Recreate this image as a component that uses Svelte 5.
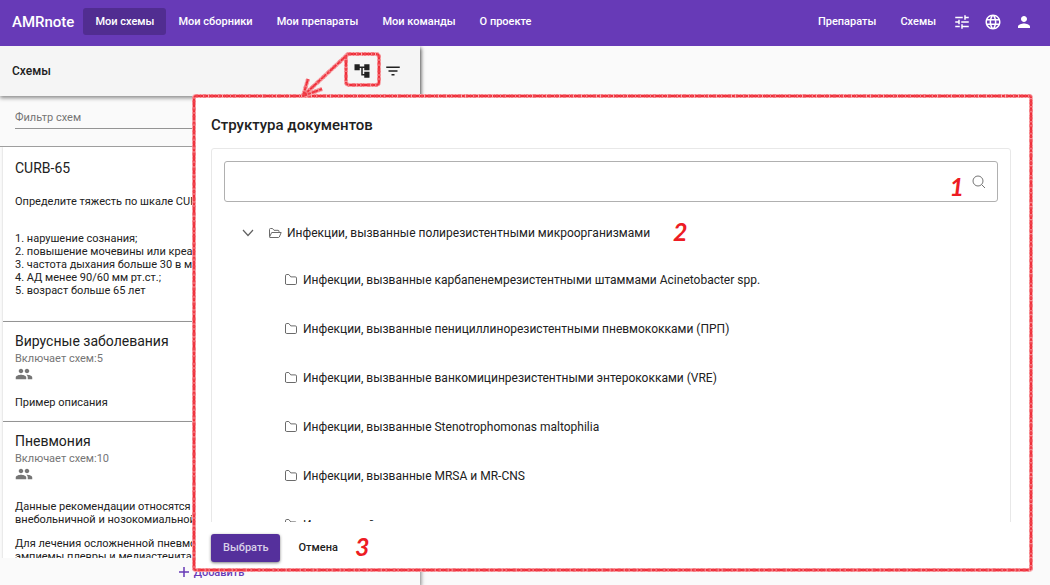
<script>
  const nav = ['Мои схемы', 'Мои сборники', 'Мои препараты', 'Мои команды', 'О проекте'];
  const cards = [
    {
      title: 'CURB-65',
      paragraphs: [
        'Определите тяжесть по шкале CURB-65',
        '\n1. нарушение сознания;\n2. повышение мочевины или креатинина;\n3. частота дыхания больше 30 в минуту;\n4. АД менее 90/60 мм рт.ст.;\n5. возраст больше 65 лет'
      ]
    },
    { title: 'Вирусные заболевания', count: 5, paragraphs: ['Пример описания'] },
    {
      title: 'Пневмония',
      count: 10,
      paragraphs: [
        'Данные рекомендации относятся к\nвнебольничной и нозокомиальной',
        'Для лечения осложненной пневмонии\nэмпиемы плевры и медиастенита и'
      ]
    }
  ];
  const folders = [
    'Инфекции, вызванные карбапенемрезистентными штаммами Acinetobacter spp.',
    'Инфекции, вызванные пенициллинорезистентными пневмококками (ПРП)',
    'Инфекции, вызванные ванкомицинрезистентными энтерококками (VRE)',
    'Инфекции, вызванные Stenotrophomonas maltophilia',
    'Инфекции, вызванные MRSA и MR-CNS',
    'Инвазивный кандидоз'
  ];
  let query = $state('');
  let filter = $state('');
</script>

{#snippet folderIcon()}
  <svg class="folder" viewBox="0 0 14 14" aria-hidden="true"><path d="M1.5 11V2.8Q1.5 1.5 2.8 1.5H4.8L6.8 3.9H11.3Q12.5 3.9 12.5 5.1V10.3Q12.5 11.5 11.3 11.5H2.7Q1.5 11.5 1.5 10.3Z" /></svg>
{/snippet}

<div class="app">
  <header class="topbar">
    <a class="brand" href="#home">AMRnote</a>
    <nav>
      {#each nav as item, i}
        <a class="link" class:active={i === 0} href="#nav{i}">{item}</a>
      {/each}
    </nav>
    <div class="tools">
      <a class="link" href="#drugs">Препараты</a>
      <a class="link" href="#schemes">Схемы</a>
      <button class="icon" aria-label="Настройки">
        <svg viewBox="0 0 24 24"><path d="M3 17v2h6v-2H3zM3 5v2h10V5H3zm10 16v-2h8v-2h-8v-2h-2v6h2zM7 9v2H3v2h4v2h2V9H7zm14 4v-2H11v2h10zm-6-4h2V7h4V5h-4V3h-2v6z" /></svg>
      </button>
      <button class="icon" aria-label="Язык">
        <svg viewBox="0 0 24 24"><path d="M11.99 2C6.47 2 2 6.48 2 12s4.47 10 9.99 10C17.52 22 22 17.52 22 12S17.52 2 11.99 2zm6.93 6h-2.95c-.32-1.25-.78-2.45-1.38-3.56 1.84.63 3.37 1.91 4.33 3.56zM12 4.04c.83 1.2 1.48 2.53 1.91 3.96h-3.82c.43-1.43 1.08-2.76 1.91-3.96zM4.26 14C4.1 13.36 4 12.69 4 12s.1-1.36.26-2h3.38c-.08.66-.14 1.32-.14 2s.06 1.34.14 2H4.26zm.82 2h2.95c.32 1.25.78 2.45 1.38 3.56-1.84-.63-3.37-1.9-4.33-3.56zm2.95-8H5.08c.96-1.66 2.49-2.93 4.33-3.56C8.81 5.55 8.35 6.75 8.03 8zM12 19.96c-.83-1.2-1.48-2.53-1.91-3.96h3.82c-.43 1.43-1.08 2.76-1.91 3.96zM14.34 14H9.66c-.09-.66-.16-1.32-.16-2s.07-1.35.16-2h4.68c.09.65.16 1.32.16 2s-.07 1.34-.16 2zm.25 5.56c.6-1.11 1.06-2.31 1.38-3.56h2.95c-.96 1.65-2.49 2.93-4.33 3.56zM16.36 14c.08-.66.14-1.32.14-2s-.06-1.34-.14-2h3.38c.16.64.26 1.31.26 2s-.1 1.36-.26 2h-3.38z" /></svg>
      </button>
      <button class="icon" aria-label="Профиль">
        <svg viewBox="0 0 24 24"><path d="M12 12c2.21 0 4-1.79 4-4s-1.79-4-4-4-4 1.79-4 4 1.79 4 4 4zm0 2c-2.67 0-8 1.34-8 4v2h16v-2c0-2.66-5.33-4-8-4z" /></svg>
      </button>
    </div>
  </header>

  <aside class="side">
    <div class="side-head">
      <h2>Схемы</h2>
      <button class="icon" aria-label="Структура документов">
        <svg viewBox="0 0 24 24"><path d="M22 11V3h-7v3H9V3H2v8h7V8h2v10h4v3h7v-8h-7v3h-2V8h2v3z" /></svg>
      </button>
      <button class="icon" aria-label="Фильтр">
        <svg viewBox="0 0 24 24"><path d="M10 18h4v-2h-4v2zM3 6v2h18V6H3zm3 7h12v-2H6v2z" /></svg>
      </button>
    </div>
    <div class="filter">
      <input bind:value={filter} placeholder="Фильтр схем" aria-label="Фильтр схем" />
    </div>
    <div class="cards">
      {#each cards as card}
        <article class="card">
          <h3>{card.title}</h3>
          {#if card.count}
            <p class="count">Включает схем:{card.count}</p>
            <svg class="group" viewBox="0 0 24 24" aria-hidden="true"><path d="M16 11c1.66 0 2.99-1.34 2.99-3S17.66 5 16 5s-3 1.34-3 3 1.34 3 3 3zm-8 0c1.66 0 2.99-1.34 2.99-3S9.66 5 8 5 5 6.34 5 8s1.34 3 3 3zm0 2c-2.33 0-7 1.17-7 3.5V19h14v-2.5c0-2.33-4.67-3.5-7-3.5zm8 0c-.29 0-.62.02-.97.05 1.16.84 1.97 1.97 1.97 3.45V19h6v-2.5c0-2.33-4.67-3.5-7-3.5z" /></svg>
          {/if}
          <div class="body">
            {#each card.paragraphs as text}<p>{text}</p>{/each}
          </div>
        </article>
      {/each}
    </div>
    <button class="add">
      <svg viewBox="0 0 12 12" aria-hidden="true"><path d="M6 1V11M1 6H11" /></svg>
      Добавить
    </button>
  </aside>

  <section class="dialog" role="dialog" aria-labelledby="dialog-title">
    <h1 id="dialog-title">Структура документов</h1>
    <div class="scroll">
      <div class="panel">
        <div class="search">
          <input bind:value={query} aria-label="Поиск" />
          <span class="mark">1</span>
          <svg viewBox="0 0 14 14" aria-hidden="true"><circle cx="6" cy="6" r="5" /><path d="M9.6 9.6L13 13" /></svg>
        </div>
        <ul>
          <li class="root">
            <button class="chevron" aria-label="Свернуть">
              <svg viewBox="0 0 12 12"><path d="M1 3L6 8.5L11 3" /></svg>
            </button>
            <svg class="folder" viewBox="0 0 14 14" aria-hidden="true"><path d="M1.5 10.5V3.5Q1.5 2.5 2.5 2.5H4.5L6 4.3H10Q11 4.3 11 5.3V6.5M1.5 11L3.7 6.5H13.2L11.3 11Q11 11.5 10.5 11.5H2Q1.5 11.5 1.5 11Z" /></svg>
            <span>Инфекции, вызванные полирезистентными микроорганизмами</span>
            <span class="mark">2</span>
          </li>
          {#each folders as name}
            <li>{@render folderIcon()}<span>{name}</span></li>
          {/each}
        </ul>
      </div>
    </div>
    <footer>
      <button class="primary">Выбрать</button>
      <button class="cancel">Отмена</button>
      <span class="mark">3</span>
    </footer>
    <svg class="outline" aria-hidden="true">
      <rect class="wash" width="100%" height="100%" rx="2" />
      <rect class="chalk" width="100%" height="100%" rx="2" />
      <rect class="grain" width="100%" height="100%" rx="2" />
    </svg>
  </section>

  <svg class="pointer" viewBox="0 0 84 50" aria-hidden="true">
    {#each ['wash', 'chalk', 'grain'] as layer}
      <g class={layer}>
        <rect x="46" y="4" width="33" height="31" rx="3" />
        <path d="M46 6L4 45M8 29L3 46L22 39" />
      </g>
    {/each}
  </svg>
</div>

<style>
  :global(body) { margin: 0; }
  * { box-sizing: border-box; }
  .app {
    position: relative;
    display: flex;
    flex-direction: column;
    height: 100vh;
    overflow: hidden;
    background: #fafafa;
    color: #212121;
    font: 11px/13px Roboto, sans-serif;
  }
  h1, h2, h3, p, ul { margin: 0; padding: 0; }
  button, input { font: inherit; color: inherit; border: 0; padding: 0; background: none; }
  button { cursor: pointer; }
  svg { display: block; flex: none; }

  .topbar {
    position: relative;
    z-index: 1;
    display: flex;
    flex: none;
    align-items: center;
    height: 46px;
    padding: 0 17px 3px 12px;
    background: #673ab7;
    color: #fff;
  }
  a { color: inherit; text-decoration: none; white-space: nowrap; }
  .brand { font-size: 15px; font-weight: 500; line-height: 20px; margin-right: 9px; }
  nav, .tools { display: flex; align-items: center; }
  .link { padding: 0 12px; border-radius: 3px; font-weight: 500; line-height: 27px; }
  .active { background: #512d91; }
  .tools { margin-left: auto; }
  .icon { width: 18px; height: 18px; }
  .icon svg { width: 100%; height: 100%; fill: currentColor; }
  .tools .icon { margin-left: 13px; }
  .tools .link + .icon { margin-left: 5px; }

  .side {
    display: flex;
    flex: 1;
    flex-direction: column;
    width: 40%;
    min-height: 0;
    box-shadow: 1px 2px 4px rgba(0, 0, 0, 0.5);
  }
  .side-head {
    display: flex;
    flex: none;
    position: relative;
    align-items: center;
    gap: 13px;
    height: 50px;
    padding: 0 18px 0 12px;
    background: #f5f5f5;
    box-shadow: 0 2px 4px rgba(0, 0, 0, 0.45);
  }
  h2 { flex: 1; font-size: 12px; font-weight: 500; line-height: 16px; }
  .filter { flex: none; height: 51px; padding: 10px 15px 0; border-bottom: 1px solid #9e9e9e; }
  .filter input { width: 100%; height: 23px; border-bottom: 1px solid #949494; outline: 0; }
  .filter input::placeholder { color: #757575; opacity: 1; }
  .cards { flex: 1; min-height: 0; overflow: hidden; padding: 0 3px; }
  .card {
    padding: 10px 12px 12px;
    background: #fff;
    border-bottom: 1px solid #9e9e9e;
    box-shadow: 0 0 2px rgba(0, 0, 0, 0.2);
  }
  h3 { font-size: 14px; font-weight: 400; line-height: 18px; }
  .count { margin-top: 2px; color: #757575; }
  .group { width: 18px; height: 18px; fill: #757575; }
  .body { padding-top: 17px; }
  .body p { margin-bottom: 11px; white-space: pre; }
  .card:first-child h3 { line-height: 23px; }
  .card:first-child .body { padding: 15px 0 1px; }
  .card:nth-child(2) .body { padding-top: 13px; }
  .card:nth-child(2) .body p { margin: 0; }
  .add {
    display: flex;
    flex: none;
    justify-content: center;
    gap: 4px;
    height: 27px;
    padding: 8px 0 0 2px;
    color: #673ab7;
    background: #fafafa;
    font-weight: 500;
  }
  .add svg { width: 12px; height: 12px; stroke: #673ab7; stroke-width: 1.5; }

  .dialog {
    position: absolute;
    inset: 96px 19px 15px 194px;
    display: flex;
    flex-direction: column;
    padding: 20px 20px 8px 17px;
    background: #fff;
  }
  h1 { font-size: 15px; font-weight: 500; line-height: 18px; }
  .scroll { flex: 1; min-height: 0; overflow: hidden; margin-top: 14px; }
  .panel { padding: 12px; border: 1px solid #e8e8e8; border-radius: 3px; }
  .search {
    display: flex;
    align-items: center;
    gap: 8px;
    height: 41px;
    padding: 0 11px;
    border: 1px solid #b0b0b0;
    border-radius: 3px;
  }
  .search input { flex: 1; min-width: 0; height: 32px; outline: 0; }
  .search svg { width: 14px; height: 14px; fill: none; stroke: #757575; }
  .mark { padding-bottom: 4px; color: #ed1c24; font: italic 700 25px/24px Lato, sans-serif; }
  .search .mark { padding: 8px 0 0; }
  ul { list-style: none; font-size: 12px; line-height: 16px; }
  li { display: flex; align-items: center; gap: 5px; height: 49px; padding-left: 60px; white-space: nowrap; }
  li.root { height: 53px; padding: 8px 0 0 18px; }
  .folder { width: 14px; height: 14px; fill: none; stroke: #6b6b6b; }
  .chevron { width: 12px; height: 12px; margin-right: 9px; }
  .chevron svg { fill: none; stroke: #616161; stroke-width: 1.2; }
  .root .mark { margin-left: 18px; }
  footer { display: flex; align-items: center; padding-top: 12px; }
  .primary, .cancel { height: 28px; padding: 0 12px 1px; border-radius: 3px; font-weight: 500; }
  .primary { background: #55309c; color: #d9d0e8; box-shadow: 0 1px 3px rgba(0, 0, 0, 0.5); }
  .cancel { margin: 0 5px 0 6px; }

  .outline { position: absolute; inset: 0; width: 100%; height: 100%; overflow: visible; pointer-events: none; }
  .outline, .pointer { fill: none; stroke-linejoin: round; }
  .wash { stroke: #f9a8ac; stroke-width: 4; }
  .chalk { stroke: #ee2e39; stroke-width: 2; stroke-dasharray: 7 1 4 1 9 1 3 1; }
  .grain { stroke: #f25a64; stroke-width: 4; stroke-dasharray: 2 2 1 2 3 3 1 1; opacity: 0.5; }
  .pointer { position: absolute; top: 50px; left: 300px; width: 84px; height: 50px; pointer-events: none; }
</style>
